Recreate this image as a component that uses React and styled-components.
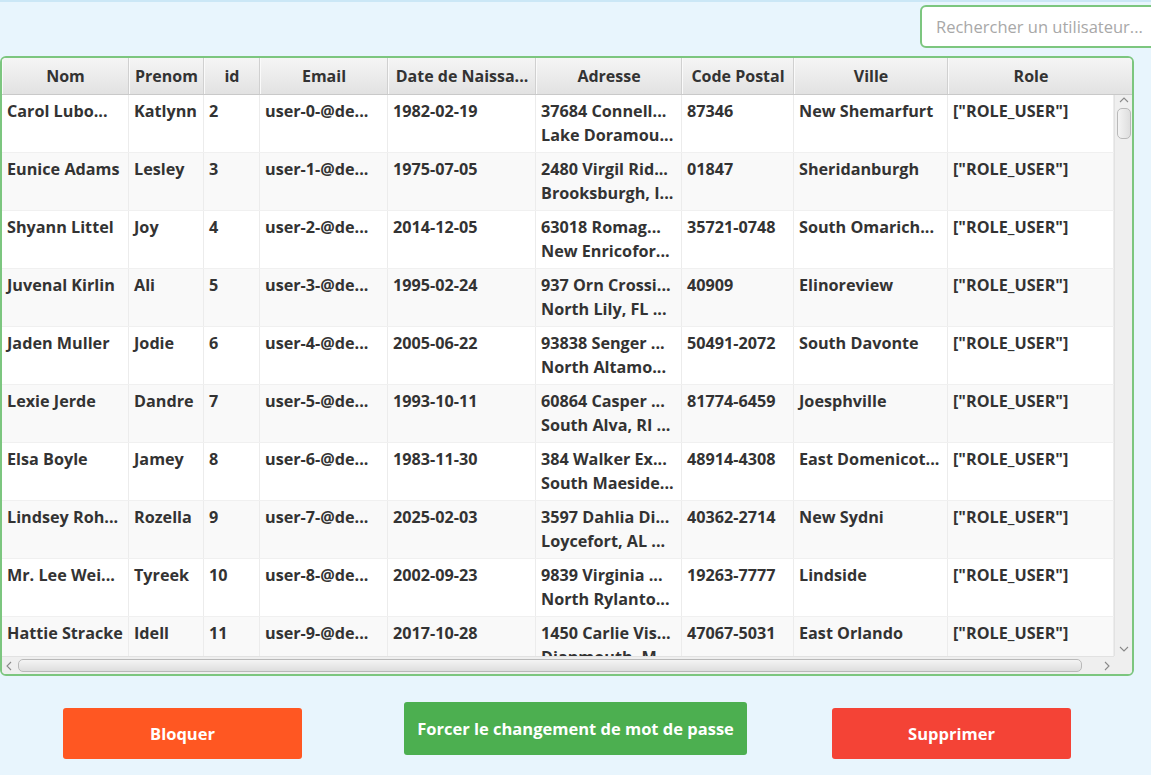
import React from 'react';
import styled, { createGlobalStyle } from 'styled-components';

const GlobalStyle = createGlobalStyle`
  html, body {
    margin: 0;
    padding: 0;
    background: #e8f5fd;
    overflow: hidden;
  }
  body {
    font-family: "Open Sans", "Noto Sans", sans-serif;
    color: #333;
  }
`;

const COLS = '127px 75px 56px 128px 148px 146px 112px 154px 166px';

const Page = styled.div`
  width: 1151px;
  height: 775px;
  border-top: 2px solid #cbe7f6;
  box-sizing: border-box;
  display: flex;
  flex-direction: column;
`;

const TopBar = styled.div`
  height: 54px;
  display: flex;
  justify-content: flex-end;
  align-items: flex-start;
  padding-top: 3px;
  box-sizing: border-box;
  overflow: hidden;
`;

const Search = styled.input`
  width: 250px;
  height: 43px;
  margin-right: -19px;
  box-sizing: border-box;
  border: 2px solid #7cc67f;
  border-radius: 6px;
  background: #fff;
  padding: 0 14px;
  font-family: "Open Sans", sans-serif;
  font-size: 16.5px;
  color: #333;
  outline: none;
  &::placeholder {
    color: #a8a8a8;
  }
`;

const TableFrame = styled.div`
  width: 1134px;
  height: 620px;
  box-sizing: border-box;
  border: 2px solid #7cc67f;
  border-radius: 6px;
  background: #fff;
  display: flex;
  flex-direction: column;
  overflow: hidden;
`;

const HeaderRow = styled.div`
  display: grid;
  grid-template-columns: ${COLS} 1fr;
  height: 36px;
  flex-shrink: 0;
  background: linear-gradient(#f5f5f5, #e2e2e2);
  border-bottom: 1px solid #c9c9c9;
`;

const HeaderCell = styled.div`
  display: flex;
  align-items: center;
  justify-content: center;
  border-right: 1px solid ${p => (p.$last ? 'transparent' : '#d0d0d0')};
  border-left: 1px solid #fafafa;
  font-weight: 700;
  font-size: 16px;
  white-space: nowrap;
  overflow: hidden;
`;

const BodyArea = styled.div`
  flex: 1;
  display: grid;
  grid-template-columns: 1fr 18px;
  grid-template-rows: 1fr 18px;
  min-height: 0;
`;

const Rows = styled.div`
  overflow: hidden;
  display: flex;
  flex-direction: column;
`;

const Row = styled.div`
  display: grid;
  grid-template-columns: ${COLS};
  height: 58px;
  flex-shrink: 0;
  background: ${p => (p.$odd ? '#f9f9f9' : '#fff')};
  border-bottom: 1px solid #f0f0f0;
  box-sizing: border-box;
`;

const Cell = styled.div`
  padding: 4px 5px 0 5px;
  border-right: 1px solid #ececec;
  font-weight: 700;
  font-size: 16.2px;
  line-height: 24px;
  white-space: nowrap;
  overflow: hidden;
`;

const VScroll = styled.div`
  background: #efefef;
  border-left: 1px solid #e2e2e2;
  display: flex;
  flex-direction: column;
  align-items: center;
  padding: 2px 0 4px;
`;

const HScroll = styled.div`
  background: #efefef;
  border-top: 1px solid #e2e2e2;
  display: flex;
  align-items: center;
  padding: 0 4px;
  gap: 6px;
`;

const Corner = styled.div`
  background: #efefef;
`;

const VThumb = styled.div`
  width: 12px;
  height: 29px;
  margin-top: 5px;
  margin-bottom: auto;
  border: 1px solid #b9b9b9;
  border-radius: 5px;
  background: linear-gradient(90deg, #f4f4f4, #dedede);
`;

const HThumb = styled.div`
  flex: 1;
  height: 11px;
  border: 1px solid #b9b9b9;
  border-radius: 5px;
  background: linear-gradient(#f4f4f4, #dedede);
  margin-right: 16px;
`;

const ButtonRow = styled.div`
  flex: 1;
  display: flex;
  align-items: flex-start;
  padding-left: 63px;
  padding-top: 26px;
`;

const ActionButton = styled.button`
  width: ${p => p.$w}px;
  height: ${p => p.$h}px;
  margin-left: ${p => p.$gap || 0}px;
  margin-top: ${p => p.$drop || 0}px;
  border: none;
  border-radius: 3px;
  background: ${p => p.$bg};
  color: #fff;
  font-family: "Open Sans", sans-serif;
  font-weight: 700;
  font-size: 16.5px;
  cursor: pointer;
`;

const Chevron = ({ dir }) => {
  const d = {
    up: 'M1 5 L5 1 L9 5',
    down: 'M1 1 L5 5 L9 1',
    left: 'M5 1 L1 5 L5 9',
    right: 'M1 1 L5 5 L1 9',
  }[dir];
  const vertical = dir === 'up' || dir === 'down';
  return (
    <svg width={vertical ? 10 : 6} height={vertical ? 6 : 10} viewBox={vertical ? '0 0 10 6' : '0 0 6 10'}>
      <path d={d} fill="none" stroke="#8a8a8a" strokeWidth="1.1" />
    </svg>
  );
};

const headers = ['Nom', 'Prenom', 'id', 'Email', 'Date de Naissa...', 'Adresse', 'Code Postal', 'Ville', 'Role'];

const users = [
  ['Carol Lubo...', 'Katlynn', '2', 'user-0-@de...', '1982-02-19', '37684 Connell...', 'Lake Doramou...', '87346', 'New Shemarfurt'],
  ['Eunice Adams', 'Lesley', '3', 'user-1-@de...', '1975-07-05', '2480 Virgil Rid...', 'Brooksburgh, I...', '01847', 'Sheridanburgh'],
  ['Shyann Littel', 'Joy', '4', 'user-2-@de...', '2014-12-05', '63018 Romag...', 'New Enricofor...', '35721-0748', 'South Omarich...'],
  ['Juvenal Kirlin', 'Ali', '5', 'user-3-@de...', '1995-02-24', '937 Orn Crossi...', 'North Lily, FL ...', '40909', 'Elinoreview'],
  ['Jaden Muller', 'Jodie', '6', 'user-4-@de...', '2005-06-22', '93838 Senger ...', 'North Altamo...', '50491-2072', 'South Davonte'],
  ['Lexie Jerde', 'Dandre', '7', 'user-5-@de...', '1993-10-11', '60864 Casper ...', 'South Alva, RI ...', '81774-6459', 'Joesphville'],
  ['Elsa Boyle', 'Jamey', '8', 'user-6-@de...', '1983-11-30', '384 Walker Ex...', 'South Maeside...', '48914-4308', 'East Domenicot...'],
  ['Lindsey Roh...', 'Rozella', '9', 'user-7-@de...', '2025-02-03', '3597 Dahlia Di...', 'Loycefort, AL ...', '40362-2714', 'New Sydni'],
  ['Mr. Lee Wei...', 'Tyreek', '10', 'user-8-@de...', '2002-09-23', '9839 Virginia ...', 'North Rylanto...', '19263-7777', 'Lindside'],
  ['Hattie Stracke', 'Idell', '11', 'user-9-@de...', '2017-10-28', '1450 Carlie Vis...', 'Dianmouth, M...', '47067-5031', 'East Orlando'],
];

export default function App() {
  return (
    <>
      <GlobalStyle />
      <Page>
        <TopBar>
          <Search placeholder="Rechercher un utilisateur..." />
        </TopBar>

        <TableFrame>
          <HeaderRow>
            {headers.map((h, i) => (
              <HeaderCell key={h} $last={i === headers.length - 1}>{h}</HeaderCell>
            ))}
            <div />
          </HeaderRow>

          <BodyArea>
            <Rows>
              {users.map((u, i) => (
                <Row key={u[2]} $odd={i % 2 === 1}>
                  <Cell>{u[0]}</Cell>
                  <Cell>{u[1]}</Cell>
                  <Cell>{u[2]}</Cell>
                  <Cell>{u[3]}</Cell>
                  <Cell>{u[4]}</Cell>
                  <Cell>{u[5]}<br />{u[6]}</Cell>
                  <Cell>{u[7]}</Cell>
                  <Cell>{u[8]}</Cell>
                  <Cell>["ROLE_USER"]</Cell>
                </Row>
              ))}
            </Rows>
            <VScroll>
              <Chevron dir="up" />
              <VThumb />
              <Chevron dir="down" />
            </VScroll>
            <HScroll>
              <Chevron dir="left" />
              <HThumb />
              <Chevron dir="right" />
            </HScroll>
            <Corner />
          </BodyArea>
        </TableFrame>

        <ButtonRow>
          <ActionButton $w={239} $h={51} $drop={6} $bg="#ff5722">Bloquer</ActionButton>
          <ActionButton $w={343} $h={53} $gap={102} $bg="#4caf50">Forcer le changement de mot de passe</ActionButton>
          <ActionButton $w={239} $h={51} $gap={85} $drop={6} $bg="#f44336">Supprimer</ActionButton>
        </ButtonRow>
      </Page>
    </>
  );
}
